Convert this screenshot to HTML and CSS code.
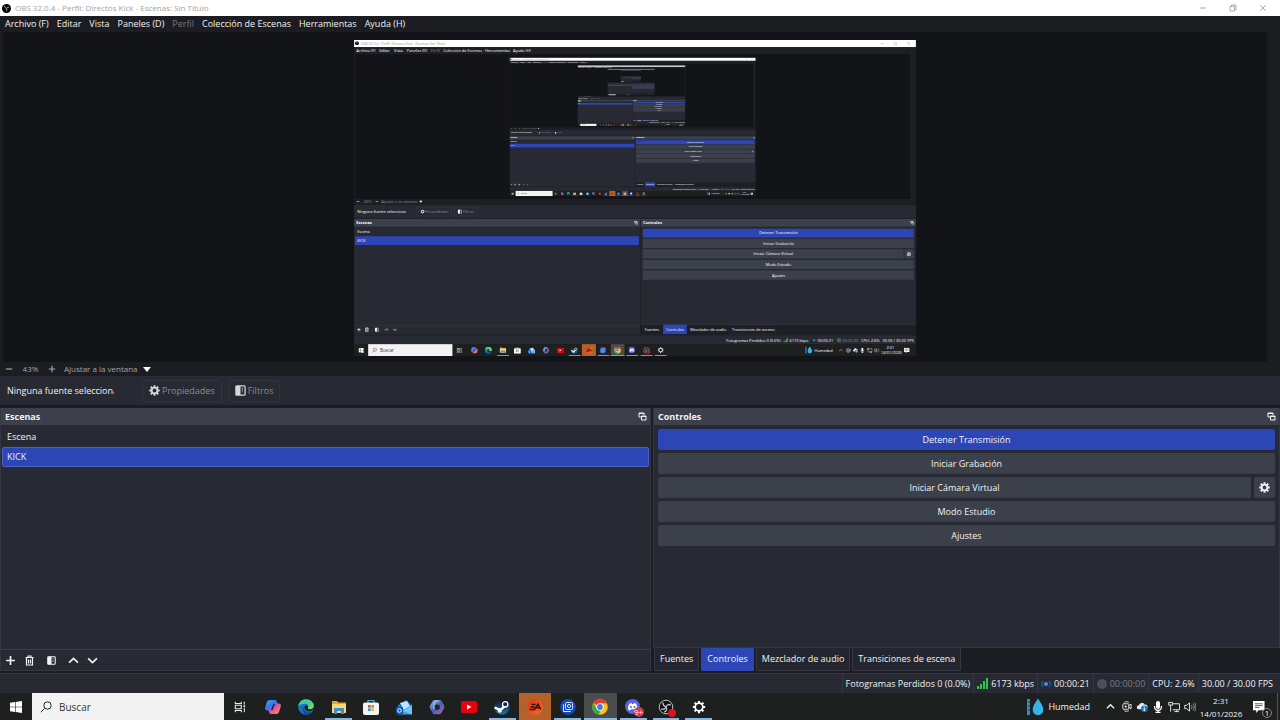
FILE: index.html
```
<!DOCTYPE html>
<html lang="es">
<head>
    <meta charset="UTF-8">
    <meta name="viewport" content="width=device-width, initial-scale=1.0">
    <title>OBS 32.0.4 - Perfil: Directos Kick - Escenas: Sin Título</title>
    <link rel="stylesheet" href="styles.css">
</head>
<body>
    <!-- Iconos compartidos -->
    <svg class="sprites" aria-hidden="true">
        <defs>
            <linearGradient id="gCopilot" x1="0" y1="0" x2="1" y2="1">
                <stop offset="0" stop-color="#2bb5f5"/><stop offset=".4" stop-color="#3f6ff0"/><stop offset=".6" stop-color="#e0559b"/><stop offset="1" stop-color="#f9a13a"/>
            </linearGradient>
            <linearGradient id="gEdge" x1="0" y1="0" x2="1" y2="1">
                <stop offset="0" stop-color="#2fc6e8"/><stop offset=".5" stop-color="#43d27c"/><stop offset="1" stop-color="#8be05a"/>
            </linearGradient>
            <linearGradient id="gOffice" x1="0" y1="0" x2="1" y2="1">
                <stop offset="0" stop-color="#8fb6e8"/><stop offset=".5" stop-color="#4661b4"/><stop offset="1" stop-color="#b35fb5"/>
            </linearGradient>
            <linearGradient id="gSteam" x1="0" y1="0" x2="0" y2="1">
                <stop offset="0" stop-color="#10192c"/><stop offset="1" stop-color="#1d6ea5"/>
            </linearGradient>
            <linearGradient id="gEa" x1="0" y1="0" x2="1" y2="1">
                <stop offset="0" stop-color="#d8351f"/><stop offset="1" stop-color="#ff6a1c"/>
            </linearGradient>
        </defs>
        <symbol id="obs" viewBox="0 0 16 16">
            <circle cx="8" cy="8" r="7.6" fill="#111"/>
            <circle cx="8" cy="8" r="6.8" fill="none" stroke="#c4c4c4"/>
            <path d="M5 3.400c0 3 1.500 4.200 3.400 4.300M12.800 6.200C10.500 4.600 8.500 6 8.200 8M6.200 13.200c2.600-1 2.900-3.200 2-5M3 9.800c2 1.200 4 .2 5.200-1.600" fill="none" stroke="#c4c4c4" stroke-width="1.300"/>
        </symbol>
        <symbol id="obsApp" viewBox="0 0 16 16">
            <circle cx="8" cy="8" r="8" fill="#000"/>
            <path d="M4.500 3.200c0 2.600 1.300 4 3.500 4.300M12.600 6c-2-1-3.800 0-4.200 1.800M7 13c1.800-1.200 2.200-3 1.200-4.800" fill="none" stroke="#ddd" stroke-width="1.500"/>
        </symbol>
        <symbol id="gear" viewBox="0 0 16 16">
            <circle cx="8" cy="8" r="4.200" fill="none" stroke="currentColor" stroke-width="2.800"/>
            <path d="M8 .4v3M8 12.600v3M.4 8h3M12.600 8h3M2.600 2.600l2.200 2.200M11.200 11.200l2.200 2.200M13.400 2.600l-2.200 2.200M4.800 11.200l-2.200 2.200" stroke="currentColor" stroke-width="2.800"/>
        </symbol>
        <symbol id="gearThin" viewBox="0 0 16 16">
            <circle cx="8" cy="8" r="4.400" fill="none" stroke="#fff" stroke-width="2"/>
            <path d="M8 1v2.500M8 12.500V15M1 8h2.500M12.500 8H15M3 3l1.800 1.800M11.200 11.200L13 13M13 3l-1.800 1.800M4.800 11.200L3 13" stroke="#fff" stroke-width="2.400"/>
        </symbol>
        <symbol id="filter" viewBox="0 0 12 12">
            <rect x="1" y="1" width="10" height="10" rx="1" fill="none" stroke="currentColor" stroke-width="1.400"/>
            <path d="M1 1h5v10H1z" fill="currentColor"/>
            <path d="M8 3v6" stroke="currentColor" stroke-width="1.200" stroke-dasharray="1 1"/>
        </symbol>
        <symbol id="popout" viewBox="0 0 9 9">
            <path d="M3 5H1V1h5v2M1 1.500h5M3.500 4h4.500v4H3.500zM3.500 4.500H8" fill="none" stroke="currentColor"/>
        </symbol>
        <symbol id="plus" viewBox="0 0 10 10"><path d="M5 1v8M1 5h8" stroke="currentColor" stroke-width="1.500"/></symbol>
        <symbol id="trash" viewBox="0 0 10 11">
            <path d="M1 2.500h8M3.500 2.500V1h3v1.500M2 2.500V10h6V2.500M4 4.500v4M6 4.500v4" fill="none" stroke="currentColor" stroke-width="1.200"/>
        </symbol>
        <symbol id="up" viewBox="0 0 10 10"><path d="M1 7l4-4 4 4" fill="none" stroke="currentColor" stroke-width="1.500"/></symbol>
        <symbol id="down" viewBox="0 0 10 10"><path d="M1 3l4 4 4-4" fill="none" stroke="currentColor" stroke-width="1.500"/></symbol>
        <symbol id="bars" viewBox="0 0 11 11"><path d="M0 8h2v3H0zM3 6h2v5H3zM6 3h2v8H6zM9 0h2v11H9z" fill="#2fc44a"/></symbol>
        <symbol id="live" viewBox="0 0 10 10">
            <circle cx="5" cy="5" r="2" fill="#3f93e6"/>
            <path d="M2 2.200C.6 3.800.6 6.200 2 7.800M8 2.200c1.400 1.600 1.400 4 0 5.600" fill="none" stroke="#285b9c" stroke-width="1.200"/>
        </symbol>
        <symbol id="win" viewBox="0 0 12 12"><path d="M0 1.700L5 1v4.700H0zM5.600.9L12 0v5.700H5.600zM0 6.300h5V11l-5-.7zM5.600 6.300H12V12l-6.400-.9z" fill="#fff"/></symbol>
        <symbol id="search" viewBox="0 0 12 12"><path d="M4.500 7.500L.8 11.200" stroke="#222"/><circle cx="7.500" cy="4.500" r="3.700" fill="none" stroke="#222"/></symbol>
        <symbol id="taskview" viewBox="0 0 14 12">
            <path d="M1.500 0v2h7V0M1.500 12v-2h7v2M1.500 4h7v4h-7zM12 0v3M12 7v5" fill="none" stroke="#eee" stroke-width="1.200"/><path d="M11 4h2v2h-2z" fill="#eee"/>
        </symbol>
        <symbol id="copilot" viewBox="0 0 16 16">
            <path d="M5 1h5c1.200 0 1.600.8 2 2l.4 1.500h1.400c1.800 0 2.400 1.200 1.900 3L14.400 12c-.6 2-1.400 3-3.200 3H6c-1.200 0-1.600-.8-2-2l-.4-1.500H2.200c-1.800 0-2.400-1.200-1.900-3L1.600 4C2.200 2 3.200 1 5 1z" fill="url(#gCopilot)"/>
            <path d="M9.300 5L6.700 11" stroke="#20242c" stroke-width="1.600"/>
        </symbol>
        <symbol id="edge" viewBox="0 0 16 16">
            <circle cx="8" cy="8" r="7.800" fill="#1674c4"/>
            <path d="M.3 7.500C.8 3 4 .2 8 .2c4.500 0 7.800 3.200 7.800 6.300 0 2.500-2 3.700-4 3.700-1.600 0-2.400-.6-1.600-1.600.8-1.300.2-3.800-3.200-3.800-3 0-5.800 1-6.700 2.700z" fill="url(#gEdge)"/>
            <path d="M6 7c-1.500 3 1 6.500 5 6.300 1.500 0 2.500-.5 3.600-1.300-1.400 2.400-4 3.800-6.600 3.800C4.500 14.500 3.600 9.500 6 7z" fill="#0d4f94"/>
            <path d="M6.600 7.200c1-1.400 3.600-.8 3.500 1-.8 1-.6 2 1.400 2.200 1.600 0 3-.5 4-1.600 0 2-2 3.400-4.500 3.400-3 0-5-2.500-4.400-5z" fill="#1d1f20"/>
        </symbol>
        <symbol id="folder" viewBox="0 0 16 14">
            <path d="M1 1h5l1.500 1.500H15V12H1z" fill="#e0a92e"/><path d="M1 4h14v9H1z" fill="#f8d775"/><path d="M3 8h10v6h-3v-3H6v3H3z" fill="#3d8fd0"/>
        </symbol>
        <symbol id="store" viewBox="0 0 16 16">
            <path d="M5 4V1.500h6V4" fill="none" stroke="#55b7c9" stroke-width="1.200"/><rect y="3.500" width="16" height="12.500" rx="2" fill="#f4f4f4"/>
            <path d="M5 6h2.700v2.700H5z" fill="#e8502a"/><path d="M8.300 6H11v2.700H8.300z" fill="#7eb52c"/><path d="M5 9.300h2.700V12H5z" fill="#2a9de0"/><path d="M8.300 9.300H11V12H8.300z" fill="#f2b41a"/>
        </symbol>
        <symbol id="mail" viewBox="0 0 16 16">
            <path d="M2 6l8-5 6 5v9H2z" fill="#1768c0"/><path d="M4 4l7-2 3 5-6 4z" fill="#bfe3fa"/><path d="M2 7l7 4 7-5v9.500H2z" fill="#3aa0ea"/><path d="M7 12l9-6v9.500z" fill="#72c3f7"/>
            <rect y="8" width="7" height="7" rx="1" fill="#0f56a8"/><circle cx="3.500" cy="11.500" r="1.800" fill="none" stroke="#fff"/>
        </symbol>
        <symbol id="office" viewBox="0 0 16 16">
            <path d="M6 1h4.500c1 0 1.800.5 2.400 1.400l2 3.600c.6 1 .6 2.500 0 3.600l-2.200 4c-.6 1-1.500 1.600-2.600 1.600H6c-1 0-2-.5-2.500-1.500L1.200 9.800C.6 8.700.6 7.300 1.200 6.200l2.200-3.800C4 1.500 5 1 6 1z" fill="url(#gOffice)"/>
            <path d="M8 5.200l2.800 1.500v3L8 11.200 5.200 9.700v-3z" fill="#22242a"/><path d="M5 10V5.500C5 3.500 6.500 2 9.500 1.600" fill="none" stroke="#a7c5ea" stroke-width="1.200"/>
        </symbol>
        <symbol id="youtube" viewBox="0 0 16 12"><rect width="16" height="12" rx="2" fill="#e8000d"/><path d="M6 3.500v5L10.500 6z" fill="#fff"/></symbol>
        <symbol id="steam" viewBox="0 0 16 16">
            <circle cx="8" cy="8" r="7.800" fill="url(#gSteam)"/><path d="M.6 8.500l6 2.600 4.900-5" fill="none" stroke="#fff" stroke-width="2.400"/>
            <circle cx="11.200" cy="5.300" r="2.700" fill="#17283f" stroke="#fff" stroke-width="1.300"/><circle cx="5.800" cy="11.500" r="2.200" fill="#fff"/>
        </symbol>
        <symbol id="ea" viewBox="0 0 16 16">
            <circle cx="8" cy="8" r="7.800" fill="url(#gEa)"/><path d="M4.500 5.500h4M3.500 8h4M2.500 10.500h5L11 5.200l2.800 5.300M9.500 8.800h3.600" fill="none" stroke="#2b0b08" stroke-width="1.400"/>
        </symbol>
        <symbol id="phone" viewBox="0 0 16 16">
            <circle cx="8" cy="8" r="7.900" fill="#1449b8"/><rect x="5.500" y="3.500" width="7" height="7" rx="1" fill="none" stroke="#d7e6ff"/>
            <path d="M4 5.500h-.5v7h7V12" fill="none" stroke="#d7e6ff"/><circle cx="9" cy="7" r="1.600" fill="none" stroke="#d7e6ff"/>
        </symbol>
        <symbol id="chrome" viewBox="0 0 16 16">
            <circle cx="8" cy="8" r="7.800" fill="#fbc116"/><path d="M8 8L1.300 4A7.800 7.800 0 0 1 14.800 4.200H8z" fill="#e33b2e"/><path d="M1.200 4.200L4.800 10 8 11.500 7 15.800A7.800 7.800 0 0 1 1.200 4.200z" fill="#2da94f"/>
            <circle cx="8" cy="8" r="3.800" fill="#fff"/><circle cx="8" cy="8" r="2.900" fill="#3b7de8"/>
        </symbol>
        <symbol id="discord" viewBox="0 0 16 16">
            <circle cx="7.500" cy="7.500" r="7.500" fill="#5b62e8"/><path d="M3 10.500c0-3 .8-5.500 1.800-6L6.500 4l.5 1h1.500L9 4l1.800.5c1 1 1.600 3 1.700 6l-2 1-1-1.200H6l-1 1.200z" fill="#fff"/>
            <circle cx="6" cy="8" r="1" fill="#5b62e8"/><circle cx="9.500" cy="8" r="1" fill="#5b62e8"/>
        </symbol>
        <symbol id="weather" viewBox="0 0 18 18">
            <path d="M2.500 1v16" stroke="#2f8fc4" stroke-width="3"/><path d="M4 4h-2M4 8H2M4 12H2" stroke="#1c3b4c"/>
            <path d="M12 .5c3 4.500 5.300 7.500 5.300 11A5.400 5.400 0 0 1 12 17.300a5.400 5.400 0 0 1-5.300-5.800C6.700 8 9 5 12 .5z" fill="#39b2e6"/>
        </symbol>
        <symbol id="meet" viewBox="0 0 12 12"><path d="M3.500 1.500c1.500-1 3.500-1 5 0M3.500 10.500c1.500 1 3.500 1 5 0" fill="none" stroke="#eee"/><rect x="2" y="3" width="6.500" height="6" rx="1" fill="none" stroke="#eee"/><path d="M8.500 5L11 3.500v5L8.500 7" fill="none" stroke="#eee"/><circle cx="5.200" cy="6" r="1.200" fill="#eee"/></symbol>
        <symbol id="cloud" viewBox="0 0 13 12"><path d="M2.500 8.500a2.300 2.300 0 0 1 .5-4.500 3.500 3.500 0 0 1 6.500-.5 2.500 2.500 0 0 1 1 5z" fill="#e6ecf2"/><circle cx="9" cy="8" r="3.600" fill="#1c79cd"/><path d="M9 5.500v1M9 7.300v3" stroke="#fff" stroke-width="1.200"/></symbol>
        <symbol id="mic" viewBox="0 0 10 12"><rect x="3" width="4" height="8" rx="2" fill="#fff"/><path d="M1.500 5c0 6 7 6 7 0M5 9v3M2.500 11.500h5" fill="none" stroke="#fff" stroke-width="1.300"/></symbol>
        <symbol id="net" viewBox="0 0 13 12"><path d="M5 2.500h7.500V9H5M7 11h5M9.500 9v2M.8 1h4v3h-4zM2.800 4v7" fill="none" stroke="#eee"/></symbol>
        <symbol id="sound" viewBox="0 0 13 12"><path d="M.8 4.200H3l3-2.700v9L3 7.800H.8z" fill="none" stroke="#eee"/><path d="M8 4c1 1.200 1 2.800 0 4M9.700 2.500c2 2 2 5 0 7M11.300 1.200c2.200 2.700 2.200 7 0 9.600" fill="none" stroke="#bbb" stroke-width=".8"/></symbol>
        <symbol id="note" viewBox="0 0 13 13"><path d="M0 0h12.500v10H6l-2.500 3v-3H0z" fill="#fff"/><path d="M2 3h8.500M2 5h8.500M2 7h5" stroke="#2a2a2a" stroke-width=".8"/></symbol>
    </svg>

    <header class="titlebar">
        <svg class="i9"><use href="#obsApp"/></svg>
        <h1>OBS 32.0.4 - Perfil: Directos Kick - Escenas: Sin Título</h1>
        <div class="window-buttons">
            <button type="button" aria-label="Minimizar"><svg viewBox="0 0 8 8"><path d="M1 4h6"/></svg></button>
            <button type="button" aria-label="Restaurar"><svg viewBox="0 0 8 8"><path d="M1 2.500h4.500V7H1zM2.500 2.500V1H7v4.500H5.500"/></svg></button>
            <button type="button" aria-label="Cerrar"><svg viewBox="0 0 8 8"><path d="M1 1l6 6M7 1L1 7"/></svg></button>
        </div>
    </header>

    <nav class="menubar">
        <button type="button">Archivo (F)</button>
        <button type="button">Editar</button>
        <button type="button">Vista</button>
        <button type="button">Paneles (D)</button>
        <button type="button" disabled>Perfil</button>
        <button type="button">Colección de Escenas</button>
        <button type="button">Herramientas</button>
        <button type="button">Ayuda (H)</button>
    </nav>

    <main>
        <section class="preview" aria-label="Vista previa">
            <svg class="canvas" viewBox="0 0 1280 720">
                <!-- Escritorio capturado, se repite dentro de sí mismo más abajo -->
                <g id="desktop">
                    <rect width="1280" height="720" fill="#1d1f25"/>
                    <rect width="1280" height="16" fill="#fff"/>
                    <use href="#obsApp" x="2" y="3" width="9" height="9"/>
                    <text class="cap-title" x="15" y="11">OBS 32.0.4 - Perfil: Directos Kick - Escenas: Sin Título</text>
                    <path d="M1200 8h7M1230 5h6v6h-6zM1260 4l7 7M1267 4l-7 7" stroke="#aaa" fill="none"/>
                    <g class="cap-text">
                        <text x="5" y="27">Archivo (F)</text><text x="57" y="27">Editar</text><text x="91" y="27">Vista</text><text x="120" y="27">Paneles (D)</text>
                        <text x="174" y="27" class="cap-dim">Perfil</text><text x="203" y="27">Colección de Escenas</text><text x="298" y="27">Herramientas</text><text x="362" y="27">Ayuda (H)</text>
                    </g>
                    <rect x="3" y="32" width="1264" height="330" fill="#131418"/>
                    <rect y="376" width="1280" height="30" fill="#272a33"/>
                    <path d="M143 381h79v20h-79zM228 381h54v20h-54z" fill="none" stroke="#3c404d"/>
                    <g class="cap-text">
                        <text x="7" y="394">Ninguna fuente selecciona</text>
                        <text x="22" y="372" class="cap-dim">43%</text><text x="62" y="372" class="cap-dim">Ajustar a la ventana</text>
                        <text x="163" y="394" class="cap-dim">Propiedades</text><text x="248" y="394" class="cap-dim">Filtros</text>
                    </g>
                    <g color="#fff"><use href="#gear" x="151" y="386" width="10" height="10"/><use href="#filter" x="236" y="386" width="10" height="10"/><path d="M148 366h8l-4 5zM6 368h6v1H6zM49 368h6v1h-6z" fill="#fff"/></g>
                    <path d="M0 408h651v263H0zM653 408h627v240H653z" fill="#272a33"/>
                    <path d="M0 408h651v17H0zM653 408h627v17H653z" fill="#3c404b"/>
                    <path d="M2 447h647v20H2zM658 430h617v20H658zM704 648h54v22h-54z" fill="#2c46b5"/>
                    <path d="M658 453h617v21H658zM658 477h594v21H658zM1254 477h21v21h-21zM658 501h617v21H658zM658 525h617v21H658z" fill="#3c404b"/>
                    <path d="M0 650h651M654 648h626M855 648h106v22H855" stroke="#3c404d" fill="none"/>
                    <g class="cap-text cap-bold"><text x="5" y="420">Escenas</text><text x="658" y="420">Controles</text></g>
                    <g class="cap-text">
                        <text x="7" y="440">Escena</text><text x="7" y="460">KICK</text>
                        <text x="923" y="443">Detener Transmisión</text><text x="932" y="467">Iniciar Grabación</text><text x="910" y="491">Iniciar Cámara Virtual</text>
                        <text x="938" y="515">Modo Estudio</text><text x="952" y="539">Ajustes</text>
                        <text x="662" y="662">Fuentes</text><text x="711" y="662">Controles</text><text x="766" y="662">Mezclador de audio</text><text x="861" y="662">Transiciones de escena</text>
                    </g>
                    <g color="#fff">
                        <use href="#popout" x="638" y="412" width="9" height="9"/><use href="#popout" x="1267" y="412" width="9" height="9"/><use href="#gear" x="1259" y="483" width="10" height="10"/>
                        <use href="#plus" x="6" y="655" width="10" height="10"/><use href="#trash" x="24" y="654" width="10" height="12"/><use href="#filter" x="47" y="655" width="10" height="10"/>
                        <use href="#up" x="69" y="655" width="10" height="10"/><use href="#down" x="88" y="655" width="10" height="10"/>
                    </g>
                    <rect y="673" width="1280" height="20" fill="#272a33"/>
                    <g class="cap-text">
                        <text x="848" y="687">Fotogramas Perdidos 0 (0.0%)</text><text x="992" y="687">6173 kbps</text><text x="1056" y="687">00:00:21</text>
                        <text x="1113" y="687" class="cap-dim">00:00:00</text><text x="1155" y="687">CPU: 2.6%</text><text x="1204" y="687">30.00 / 30.00 FPS</text>
                    </g>
                    <use href="#bars" x="978" y="678" width="11" height="11"/><use href="#live" x="1043" y="679" width="10" height="10"/><circle cx="1105" cy="684" r="5" fill="#555a66"/>
                    <rect y="693" width="1280" height="27" fill="#1e1f1f"/>
                    <rect x="32" y="693" width="192" height="27" fill="#f3f3f3"/>
                    <rect x="519" y="693" width="32" height="27" fill="#b5622a"/><rect x="585" y="693" width="31" height="27" fill="#4b4d4c"/>
                    <use href="#win" x="10" y="701" width="12" height="12"/><use href="#search" x="40" y="701" width="12" height="12"/><text class="cap-search" x="59" y="711">Buscar</text>
                    <use href="#taskview" x="233" y="701" width="14" height="12"/><use href="#copilot" x="266" y="699" width="16" height="16"/><use href="#edge" x="298" y="699" width="16" height="16"/>
                    <use href="#folder" x="331" y="699" width="16" height="15"/><use href="#store" x="364" y="699" width="16" height="16"/><use href="#mail" x="396" y="699" width="16" height="16"/>
                    <use href="#office" x="429" y="699" width="16" height="16"/><use href="#youtube" x="462" y="701" width="16" height="12"/><use href="#steam" x="494" y="699" width="16" height="16"/>
                    <use href="#ea" x="527" y="699" width="16" height="16"/><use href="#phone" x="559" y="699" width="16" height="16"/><use href="#chrome" x="592" y="699" width="16" height="16"/>
                    <use href="#discord" x="625" y="699" width="16" height="16"/><use href="#obs" x="658" y="699" width="16" height="16"/><circle cx="671" cy="711" r="4" fill="#e01020"/><use href="#gearThin" x="691" y="699" width="15" height="15"/>
                    <path d="M326 719h27M489 719h27M555 719h27M585 719h31M620 719h27M653 719h27M685 719h27" stroke="#7fb9e4" stroke-width="2"/>
                    <use href="#weather" x="1027" y="698" width="17" height="17"/><use href="#meet" x="1120" y="701" width="12" height="12"/><use href="#cloud" x="1136" y="701" width="13" height="12"/>
                    <use href="#mic" x="1153" y="701" width="10" height="12"/><use href="#net" x="1168" y="701" width="13" height="12"/><use href="#sound" x="1184" y="701" width="13" height="12"/><use href="#note" x="1253" y="701" width="13" height="13"/>
                    <path d="M1105 709l4-4 4 4" fill="none" stroke="#fff"/>
                    <g class="cap-text"><text x="1049" y="710">Humedad</text><text x="1213" y="704">2:31</text><text x="1200" y="716">14/01/2026</text></g>
                </g>
                <svg x="354" y="40" width="561" height="316" viewBox="0 0 1280 720">
                    <use href="#desktop"/>
                    <svg x="354" y="40" width="561" height="316" viewBox="0 0 1280 720">
                        <use href="#desktop"/>
                        <svg x="354" y="40" width="561" height="316" viewBox="0 0 1280 720">
                            <use href="#desktop"/>
                            <svg x="354" y="40" width="561" height="316" viewBox="0 0 1280 720"><use href="#desktop"/></svg>
                        </svg>
                    </svg>
                </svg>
            </svg>
        </section>

        <div class="zoombar">
            <button type="button" aria-label="Alejar"><svg class="i8" viewBox="0 0 10 10"><path d="M1 5h8" stroke="currentColor" stroke-width="1.500"/></svg></button>
            <output>43%</output>
            <button type="button" aria-label="Acercar"><svg class="i8"><use href="#plus"/></svg></button>
            <label class="scale">
                <select aria-label="Escala de la vista previa">
                    <option>Ajustar a la ventana</option>
                </select>
            </label>
        </div>

        <div class="contextbar">
            <span class="source-name">Ninguna fuente seleccionada</span>
            <button type="button" class="tool" disabled><svg class="i11"><use href="#gear"/></svg>Propiedades</button>
            <button type="button" class="tool" disabled><svg class="i11"><use href="#filter"/></svg>Filtros</button>
        </div>

        <div class="docks">
            <section class="dock scenes">
                <div class="dock-header">
                    <h2>Escenas</h2>
                    <button type="button" aria-label="Desacoplar escenas"><svg class="i9"><use href="#popout"/></svg></button>
                </div>
                <ul>
                    <li><button type="button">Escena</button></li>
                    <li><button type="button" class="selected">KICK</button></li>
                </ul>
                <div class="dock-toolbar">
                    <button type="button" aria-label="Añadir escena"><svg class="i11"><use href="#plus"/></svg></button>
                    <button type="button" aria-label="Eliminar escena"><svg class="i11"><use href="#trash"/></svg></button>
                    <button type="button" class="scene-filters" aria-label="Filtros de escena"><svg class="i9"><use href="#filter"/></svg></button>
                    <button type="button" aria-label="Subir"><svg class="i11"><use href="#up"/></svg></button>
                    <button type="button" aria-label="Bajar"><svg class="i11"><use href="#down"/></svg></button>
                </div>
            </section>

            <div class="dock-group">
                <section class="dock controls">
                    <div class="dock-header">
                        <h2>Controles</h2>
                        <button type="button" aria-label="Desacoplar controles"><svg class="i9"><use href="#popout"/></svg></button>
                    </div>
                    <div class="control-list">
                        <button type="button" class="active">Detener Transmisión</button>
                        <button type="button">Iniciar Grabación</button>
                        <div class="control-row">
                            <button type="button">Iniciar Cámara Virtual</button>
                            <button type="button" aria-label="Configurar cámara virtual"><svg class="i11"><use href="#gear"/></svg></button>
                        </div>
                        <button type="button">Modo Estudio</button>
                        <button type="button">Ajustes</button>
                    </div>
                </section>
                <div class="tabs">
                    <button type="button">Fuentes</button>
                    <button type="button" class="active">Controles</button>
                    <button type="button">Mezclador de audio</button>
                    <button type="button">Transiciones de escena</button>
                </div>
            </div>
        </div>
    </main>

    <footer class="statusbar">
        <span>Fotogramas Perdidos 0 (0.0%)</span>
        <span><svg class="i11"><use href="#bars"/></svg>6173 kbps</span>
        <span><svg class="i10"><use href="#live"/></svg>00:00:21</span>
        <span class="idle"><i class="dot"></i>00:00:00</span>
        <span>CPU: 2.6%</span>
        <span>30.00 / 30.00 FPS</span>
    </footer>

    <div class="taskbar">
        <button type="button" class="start" aria-label="Inicio"><svg class="i12"><use href="#win"/></svg></button>
        <label class="search">
            <svg class="i12"><use href="#search"/></svg>
            <input type="text" placeholder="Buscar" aria-label="Buscar">
        </label>
        <div class="apps">
            <button type="button" aria-label="Vista de tareas"><svg class="i12"><use href="#taskview"/></svg></button>
            <button type="button" aria-label="Copilot"><svg class="i16"><use href="#copilot"/></svg></button>
            <button type="button" aria-label="Edge"><svg class="i16"><use href="#edge"/></svg></button>
            <button type="button" class="open" aria-label="Explorador"><svg class="i16"><use href="#folder"/></svg></button>
            <button type="button" aria-label="Store"><svg class="i16"><use href="#store"/></svg></button>
            <button type="button" aria-label="Correo"><svg class="i16"><use href="#mail"/></svg></button>
            <button type="button" aria-label="Microsoft 365"><svg class="i16"><use href="#office"/></svg></button>
            <button type="button" aria-label="YouTube"><svg class="i16"><use href="#youtube"/></svg></button>
            <button type="button" class="open" aria-label="Steam"><svg class="i16"><use href="#steam"/></svg></button>
            <button type="button" class="alert" aria-label="EA"><svg class="i16"><use href="#ea"/></svg></button>
            <button type="button" class="open" aria-label="Enlace Móvil"><svg class="i16"><use href="#phone"/></svg></button>
            <button type="button" class="open current" aria-label="Chrome"><svg class="i16"><use href="#chrome"/></svg></button>
            <button type="button" class="open" aria-label="Discord"><svg class="i16"><use href="#discord"/></svg><span class="badge">9+</span></button>
            <button type="button" class="open" aria-label="OBS"><svg class="i16"><use href="#obs"/></svg><span class="badge rec"></span></button>
            <button type="button" class="open" aria-label="Configuración"><svg class="i14"><use href="#gearThin"/></svg></button>
        </div>
        <div class="tray">
            <button type="button" class="weather"><svg class="i18"><use href="#weather"/></svg>Humedad</button>
            <div class="tray-icons">
                <button type="button" aria-label="Iconos ocultos"><svg class="i9"><use href="#up"/></svg></button>
                <button type="button" aria-label="Reunirse ahora"><svg class="i11"><use href="#meet"/></svg></button>
                <button type="button" aria-label="OneDrive"><svg class="i12"><use href="#cloud"/></svg></button>
                <button type="button" aria-label="Micrófono"><svg class="i12"><use href="#mic"/></svg></button>
                <button type="button" aria-label="Red"><svg class="i12"><use href="#net"/></svg></button>
                <button type="button" aria-label="Volumen"><svg class="i12"><use href="#sound"/></svg></button>
            </div>
            <div class="clock"><time>2:31</time><time>14/01/2026</time></div>
            <button type="button" class="notifications" aria-label="Notificaciones"><svg class="i12"><use href="#note"/></svg><span class="count">1</span></button>
        </div>
    </div>
</body>
</html>
```
FILE: styles.css
```
* {
    box-sizing: border-box;
}
body {
    margin: 0;
    height: 100vh;
    display: flex;
    flex-direction: column;
    overflow: hidden;
    background-color: #1b1d22;
    color: #f2f2f4;
    font-family: "Open Sans", "Noto Sans", sans-serif;
    font-size: 9px;
    line-height: 14px;
}
button, input, select {
    font: inherit;
    color: inherit;
    background: none;
    border: none;
    margin: 0;
    padding: 0;
}
button {
    display: flex;
    align-items: center;
    justify-content: center;
    white-space: nowrap;
}
svg {
    display: block;
    flex: none;
}
h1, h2, ul {
    margin: 0;
    padding: 0;
}
.sprites {
    position: absolute;
    width: 0;
    height: 0;
}
.i8 { width: 8px; height: 8px; }
.i9 { width: 9px; height: 9px; }
.i10 { width: 10px; height: 10px; }
.i11 { width: 11px; height: 11px; }
.i12 { width: 12px; height: 12px; }
.i14 { width: 14px; height: 14px; }
.i16 { width: 16px; height: 16px; }
.i18 { width: 18px; height: 18px; }

/* Barra de título */
.titlebar {
    height: 16px;
    flex: none;
    display: flex;
    align-items: center;
    gap: 4px;
    padding: 0 2px;
    background-color: #fff;
}
.titlebar h1 {
    color: #a3a3a3;
    font-size: 8px;
    font-weight: normal;
}
.window-buttons {
    display: flex;
    margin-left: auto;
}
.window-buttons button {
    width: 30px;
    height: 16px;
}
.window-buttons svg {
    width: 8px;
    height: 8px;
    fill: none;
    stroke: #aaa;
}

.menubar {
    height: 16px;
    flex: none;
    display: flex;
    gap: 8px;
    padding-left: 5px;
}
.menubar button:disabled {
    color: #777981;
}

main {
    flex: 1;
    min-height: 0;
    display: flex;
    flex-direction: column;
}

/* Vista previa */
.preview {
    flex: 316;
    min-height: 0;
    margin: 0 13px 0 3px;
    padding: 8px 0 6px;
    background-color: #131418;
}
.canvas {
    width: 100%;
    height: 100%;
}
.cap-text {
    font-size: 9px;
    fill: #fff;
}
.cap-title {
    font-size: 8px;
    fill: #999;
}
.cap-search {
    font-size: 10px;
    fill: #333;
}
.cap-bold {
    font-weight: bold;
}
.cap-dim {
    fill: #8a8c93;
}

.zoombar {
    height: 14px;
    flex: none;
    display: flex;
    align-items: center;
    padding-left: 5px;
    font-size: 8px;
    color: #a3a4a9;
}
.zoombar output {
    width: 35px;
    text-align: center;
}
.scale {
    display: flex;
    align-items: center;
    width: 87px;
    margin-left: 8px;
}
.scale select {
    appearance: none;
    flex: 1;
}
.scale::after {
    content: "";
    border: 4px solid transparent;
    border-top: 5px solid #fff;
    border-bottom: none;
}

.contextbar {
    height: 29px;
    flex: none;
    display: flex;
    align-items: center;
    gap: 6px;
    padding-left: 7px;
    margin-bottom: 3px;
    background-color: #272a33;
}
.source-name {
    width: 107px;
    margin-right: 22px;
    overflow: hidden;
    white-space: nowrap;
}
.tool {
    height: 22px;
    gap: 2px;
    padding: 0 6px;
    border: 1px solid #30333d;
    border-radius: 2px;
    color: #8a8c93;
}
.tool svg {
    color: #d4d5d8;
}

/* Paneles */
.docks {
    flex: 263;
    min-height: 0;
    display: grid;
    grid-template-columns: 651fr 627fr;
    gap: 2px;
    padding-bottom: 2px;
}
.dock {
    display: flex;
    flex-direction: column;
    background-color: #272a33;
    border: 1px solid #343742;
    border-top: none;
}
.dock-header {
    height: 17px;
    display: flex;
    align-items: center;
    justify-content: space-between;
    padding: 0 3px 0 4px;
    background-color: #3c404b;
}
.dock-header h2 {
    font-size: 9px;
}
.scenes ul {
    flex: 1;
    list-style: none;
    padding: 2px 1px;
}
.scenes li button {
    width: 100%;
    height: 20px;
    justify-content: flex-start;
    padding-left: 4px;
    border: 1px solid transparent;
    border-radius: 2px;
}
.scenes li .selected {
    background-color: #2c46b5;
    border-color: #4a62c4;
}
.dock-toolbar {
    height: 21px;
    display: flex;
    align-items: center;
    gap: 8px;
    padding-left: 4px;
    border-top: 1px solid #3c404d;
}
.scene-filters {
    padding: 0 4px;
}
.dock-group {
    display: flex;
    flex-direction: column;
}
.controls {
    flex: 1;
}
.control-list {
    display: flex;
    flex-direction: column;
    gap: 3px;
    padding: 4px;
}
.control-list button {
    height: 21px;
    border-radius: 2px;
    background-color: #3c404b;
}
.control-list .active {
    background-color: #2c46b5;
}
.control-row {
    display: grid;
    grid-template-columns: 1fr 21px;
    gap: 3px;
}
.tabs {
    display: flex;
    gap: 2px;
    height: 23px;
    padding-left: 1px;
}
.tabs button {
    padding: 0 5px;
    background-color: #23262e;
    border: 1px solid #343742;
    border-top: none;
    border-radius: 0 0 2px 2px;
}
.tabs .active {
    background-color: #2c46b5;
    border-color: #2c46b5;
}

.statusbar {
    height: 20px;
    flex: none;
    display: flex;
    justify-content: flex-end;
    padding: 0 4px;
    background-color: #272a33;
    border-top: 1px solid #343742;
}
.statusbar span {
    display: flex;
    align-items: center;
    gap: 3px;
    padding: 0 3px;
    border-left: 1px solid #343742;
}
.statusbar .idle {
    color: #7b7d86;
}
.dot {
    width: 10px;
    height: 10px;
    border-radius: 50%;
    background-color: #4c4f59;
}

/* Barra de tareas */
.taskbar {
    height: 27px;
    flex: none;
    display: flex;
    background-color: #1e1f1f;
}
.start {
    width: 32px;
}
.search {
    width: 192px;
    display: flex;
    align-items: center;
    gap: 7px;
    padding-left: 8px;
    background-color: #f3f3f3;
}
.search input {
    min-width: 0;
    flex: 1;
    font-size: 10px;
    color: #333;
}
.search input::placeholder {
    color: #333;
}
.apps {
    width: 491px;
    display: grid;
    grid-template-columns: repeat(15, 1fr);
}
.apps button {
    position: relative;
}
.apps .open::after {
    content: "";
    position: absolute;
    left: 3px;
    right: 3px;
    bottom: 0;
    height: 2px;
    background-color: #7fb9e4;
}
.apps .alert {
    background-color: #b5622a;
}
.apps .current {
    background-color: #4b4d4c;
}
.apps .current::after {
    left: 0;
    right: 0;
}
.badge {
    position: absolute;
    right: 6px;
    bottom: 3px;
    width: 10px;
    height: 10px;
    border-radius: 50%;
    background-color: #d9364a;
    font-size: 8px;
    line-height: 10px;
}
.badge.rec {
    width: 8px;
    height: 8px;
    background-color: #e01020;
}
.tray {
    display: flex;
    margin: 0 2px 0 auto;
    padding-right: 3px;
    border-right: 1px solid #555;
}
.weather {
    gap: 4px;
}
.tray-icons {
    display: grid;
    grid-template-columns: repeat(6, 16px);
    margin-left: 12px;
}
.clock {
    width: 46px;
    display: flex;
    flex-direction: column;
    align-items: center;
    justify-content: center;
    font-size: 8px;
    line-height: 13px;
}
.notifications {
    position: relative;
    width: 30px;
}
.count {
    position: absolute;
    right: 2px;
    bottom: 2px;
    width: 10px;
    height: 10px;
    border: 1px solid #888;
    border-radius: 50%;
    background-color: #1e1f1f;
    font-size: 8px;
    line-height: 8px;
}
```
